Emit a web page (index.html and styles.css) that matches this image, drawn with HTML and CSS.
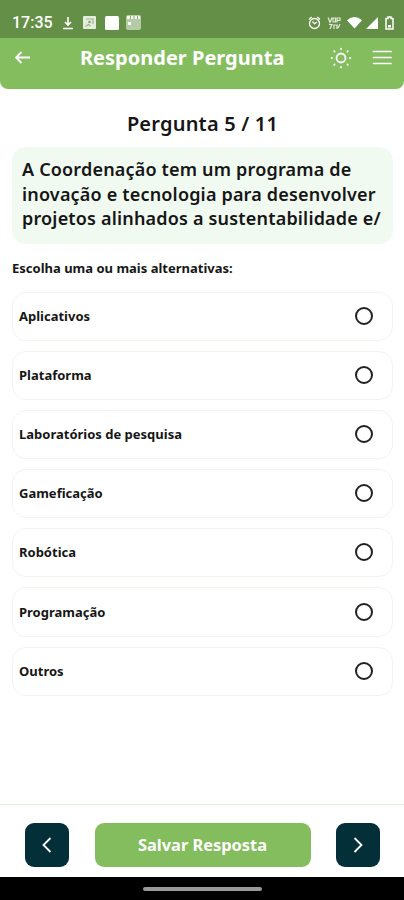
FILE: index.html
```html
<!DOCTYPE html>
<html lang="pt-BR">
<head>
    <meta charset="UTF-8">
    <meta name="viewport" content="width=device-width, initial-scale=1.0">
    <title>Responder Pergunta</title>
    <link rel="stylesheet" href="styles.css">
</head>
<body>
    <div class="status-bar">
        <span class="time">17:35</span>
        <svg class="download" width="12" height="14" viewBox="0 0 12 14">
            <path d="M6 1v8M3 6l3 3 3-3M1 12.5h10" fill="none" stroke="#fff" stroke-width="1.6"/>
        </svg>
        <svg class="photo" width="13" height="13" viewBox="0 0 13 13">
            <rect width="13" height="13" rx="1" fill="#e4ecdf"/>
            <path d="M3 3h7v5M2.5 10.5l3-2 2 1.5" fill="none" stroke="#9bb58a" stroke-width="1.2"/>
            <circle cx="6.5" cy="6" r="1.3" fill="#86a671"/>
        </svg>
        <svg class="square" width="14" height="14" viewBox="0 0 14 14">
            <rect width="14" height="14" rx="1.5" fill="#fff"/>
        </svg>
        <svg class="calendar" width="15" height="15" viewBox="0 0 15 15">
            <rect width="15" height="15" rx="2" fill="#b5cba7"/>
            <path d="M1 2.5h13" stroke="#f5f9f2" stroke-width="3"/>
            <path d="M4.5 1v3M8 1v3M11.5 1v3" stroke="#8dab79"/>
            <rect x="2" y="7" width="3" height="3" fill="#fff"/>
        </svg>
        <svg class="alarm" width="13" height="14" viewBox="0 0 13 14">
            <circle cx="6.5" cy="7.5" r="5" fill="none" stroke="#fff" stroke-width="1.3"/>
            <path d="M1 3.5L3.6 1M12 3.5L9.4 1M4.5 5.5l2 2.3L9 6" fill="none" stroke="#fff" stroke-width="1.2"/>
        </svg>
        <svg class="volte" width="14" height="14" viewBox="0 0 14 14">
            <path d="M1 1.5l2 5 2-5M6 2h2.5v4H6zM10 6.5V2h3v2.5h-3M2 8.5h3L3 13M7 13V9h3v4M11 12l2-4" fill="none" stroke="#e2ebdc" stroke-width="1.2"/>
        </svg>
        <svg class="wifi" width="15" height="13" viewBox="0 0 15 13">
            <path d="M0 4.3Q7.5-2.3 15 4.3L7.5 12.5z" fill="#fff"/>
        </svg>
        <svg class="signal" width="12" height="12" viewBox="0 0 12 12">
            <path d="M12 0v12H0z" fill="#fff"/>
        </svg>
        <svg class="battery" width="9" height="14" viewBox="0 0 9 14">
            <path d="M3 1h3v1.5h2V13H1V2.5h2z" fill="none" stroke="#fff" stroke-width="1.5"/>
            <path d="M3 9h3v2.5H3z" fill="#fff"/>
        </svg>
    </div>

    <header class="header">
        <svg class="back" width="16" height="14" viewBox="0 0 16 14">
            <path d="M15 6.5H1.5M6.5 1L1 6.5 6.5 12" fill="none" stroke="#fff" stroke-width="1.8"/>
        </svg>
        <h1>Responder Pergunta</h1>
        <svg class="sun" width="22" height="22" viewBox="0 0 22 22" fill="none" stroke="#fff" stroke-width="1.8" stroke-linecap="round">
            <circle cx="11" cy="11" r="4.5"/>
            <path d="M11 1.6v.4M11 20v.4M1.6 11h.4M20 11h.4M4.2 4.2l.4.4M17.4 17.4l.4.4M4.2 17.8l.4-.4M17.4 4.6l.4-.4"/>
        </svg>
        <svg class="menu" width="20" height="16" viewBox="0 0 20 16">
            <path d="M1.500 1.500h17.500M1.500 7.500h17.500M1.500 13.500h17.500" stroke="#fff" stroke-width="1.700" stroke-linecap="round"/>
        </svg>
    </header>

    <main class="content">
        <h2>Pergunta 5 / 11</h2>
        <div class="question">
            A Coordenação tem um programa de<br>
            inovação e tecnologia para desenvolver<br>
            projetos alinhados a sustentabilidade e/
        </div>
        <p class="hint">Escolha uma ou mais alternativas:</p>
        <div class="options">
            <div class="option"><span>Aplicativos</span><i class="radio"></i></div>
            <div class="option"><span>Plataforma</span><i class="radio"></i></div>
            <div class="option"><span>Laboratórios de pesquisa</span><i class="radio"></i></div>
            <div class="option"><span>Gameficação</span><i class="radio"></i></div>
            <div class="option"><span>Robótica</span><i class="radio"></i></div>
            <div class="option"><span>Programação</span><i class="radio"></i></div>
            <div class="option"><span>Outros</span><i class="radio"></i></div>
        </div>
    </main>

    <footer class="footer">
        <button class="nav" aria-label="Anterior">
            <svg width="10" height="16" viewBox="0 0 10 16">
                <path d="M8.5 1L1.5 8l7 7" fill="none" stroke="#fff" stroke-width="1.8"/>
            </svg>
        </button>
        <button class="save">Salvar Resposta</button>
        <button class="nav" aria-label="Próxima">
            <svg width="10" height="16" viewBox="0 0 10 16">
                <path d="M1.5 1l7 7-7 7" fill="none" stroke="#fff" stroke-width="1.8"/>
            </svg>
        </button>
    </footer>
    <div class="gesture-bar"><div class="handle"></div></div>
</body>
</html>
```
FILE: styles.css
```css
* {
    box-sizing: border-box;
}
body {
    margin: 0;
    height: 900px;
    display: flex;
    flex-direction: column;
    font-family: "Noto Sans", sans-serif;
    font-weight: 700;
    color: #161616;
    background: #fefffe;
    white-space: nowrap;
    overflow: hidden;
}
svg {
    display: block;
    flex: none;
}
.status-bar {
    height: 38px;
    padding: 7px 10px 0 12px;
    display: flex;
    align-items: center;
    background: #648f46;
}
.time {
    width: 50px;
    font: 500 16px Roboto, sans-serif;
    color: #fff;
}
.photo {
    margin-left: 9px;
}
.square {
    margin-left: 9px;
}
.calendar {
    margin-left: 7px;
}
.alarm {
    margin-left: auto;
}
.volte, .wifi {
    margin-left: 6px;
}
.signal {
    margin-left: 4px;
}
.battery {
    margin-left: 7px;
}
.header {
    height: 51px;
    padding: 0 12px 12px 15px;
    display: flex;
    align-items: center;
    background: #84bd5e;
    border-radius: 0 0 8px 8px;
}
.header h1 {
    width: 205px;
    margin: 0 0 0 49px;
    font-size: 20px;
    line-height: 30px;
    color: #fff;
}
.sun {
    margin-left: 45px;
}
.menu {
    margin-left: auto;
}
.content {
    flex: 1;
    padding: 20px 11px 0 12px;
}
.content h2 {
    margin: 0;
    text-align: center;
    font-size: 20px;
    line-height: 30px;
    font-weight: 600;
    letter-spacing: 0.2px;
}
.question {
    height: 97px;
    margin-top: 8px;
    padding: 10px;
    border-radius: 14px;
    background: #f1faf1;
    font-size: 18px;
    line-height: 24.5px;
    font-weight: 600;
    letter-spacing: 0.18px;
}
.hint {
    margin: 14px 0;
    font-size: 13px;
    line-height: 20px;
}
.options {
    display: flex;
    flex-direction: column;
    gap: 10px;
}
.option {
    height: 49.1px;
    padding: 0 19px 1px 6px;
    display: flex;
    align-items: center;
    justify-content: space-between;
    border: 1px solid #f0f6ee;
    border-radius: 14px;
    background: #fff;
    font-size: 13px;
}
.radio {
    width: 18px;
    height: 18px;
    border: 2px solid #222;
    border-radius: 50%;
}
.footer {
    height: 73px;
    padding: 7px 24px 0 25px;
    display: flex;
    align-items: center;
    justify-content: space-between;
    border-top: 1px solid #dff3d8;
}
.footer button {
    height: 44px;
    padding: 0;
    border: none;
    border-radius: 9px;
    color: #fff;
    font: 700 16.4px "Noto Sans", sans-serif;
}
.footer .nav {
    width: 44px;
    display: flex;
    align-items: center;
    justify-content: center;
    background: #022f38;
}
.footer .save {
    width: 216px;
    background: #84bd5e;
}
.gesture-bar {
    height: 23px;
    display: flex;
    align-items: center;
    justify-content: center;
    background: #000;
}
.handle {
    width: 119px;
    height: 4px;
    border-radius: 2px;
    background: #999;
}
```
